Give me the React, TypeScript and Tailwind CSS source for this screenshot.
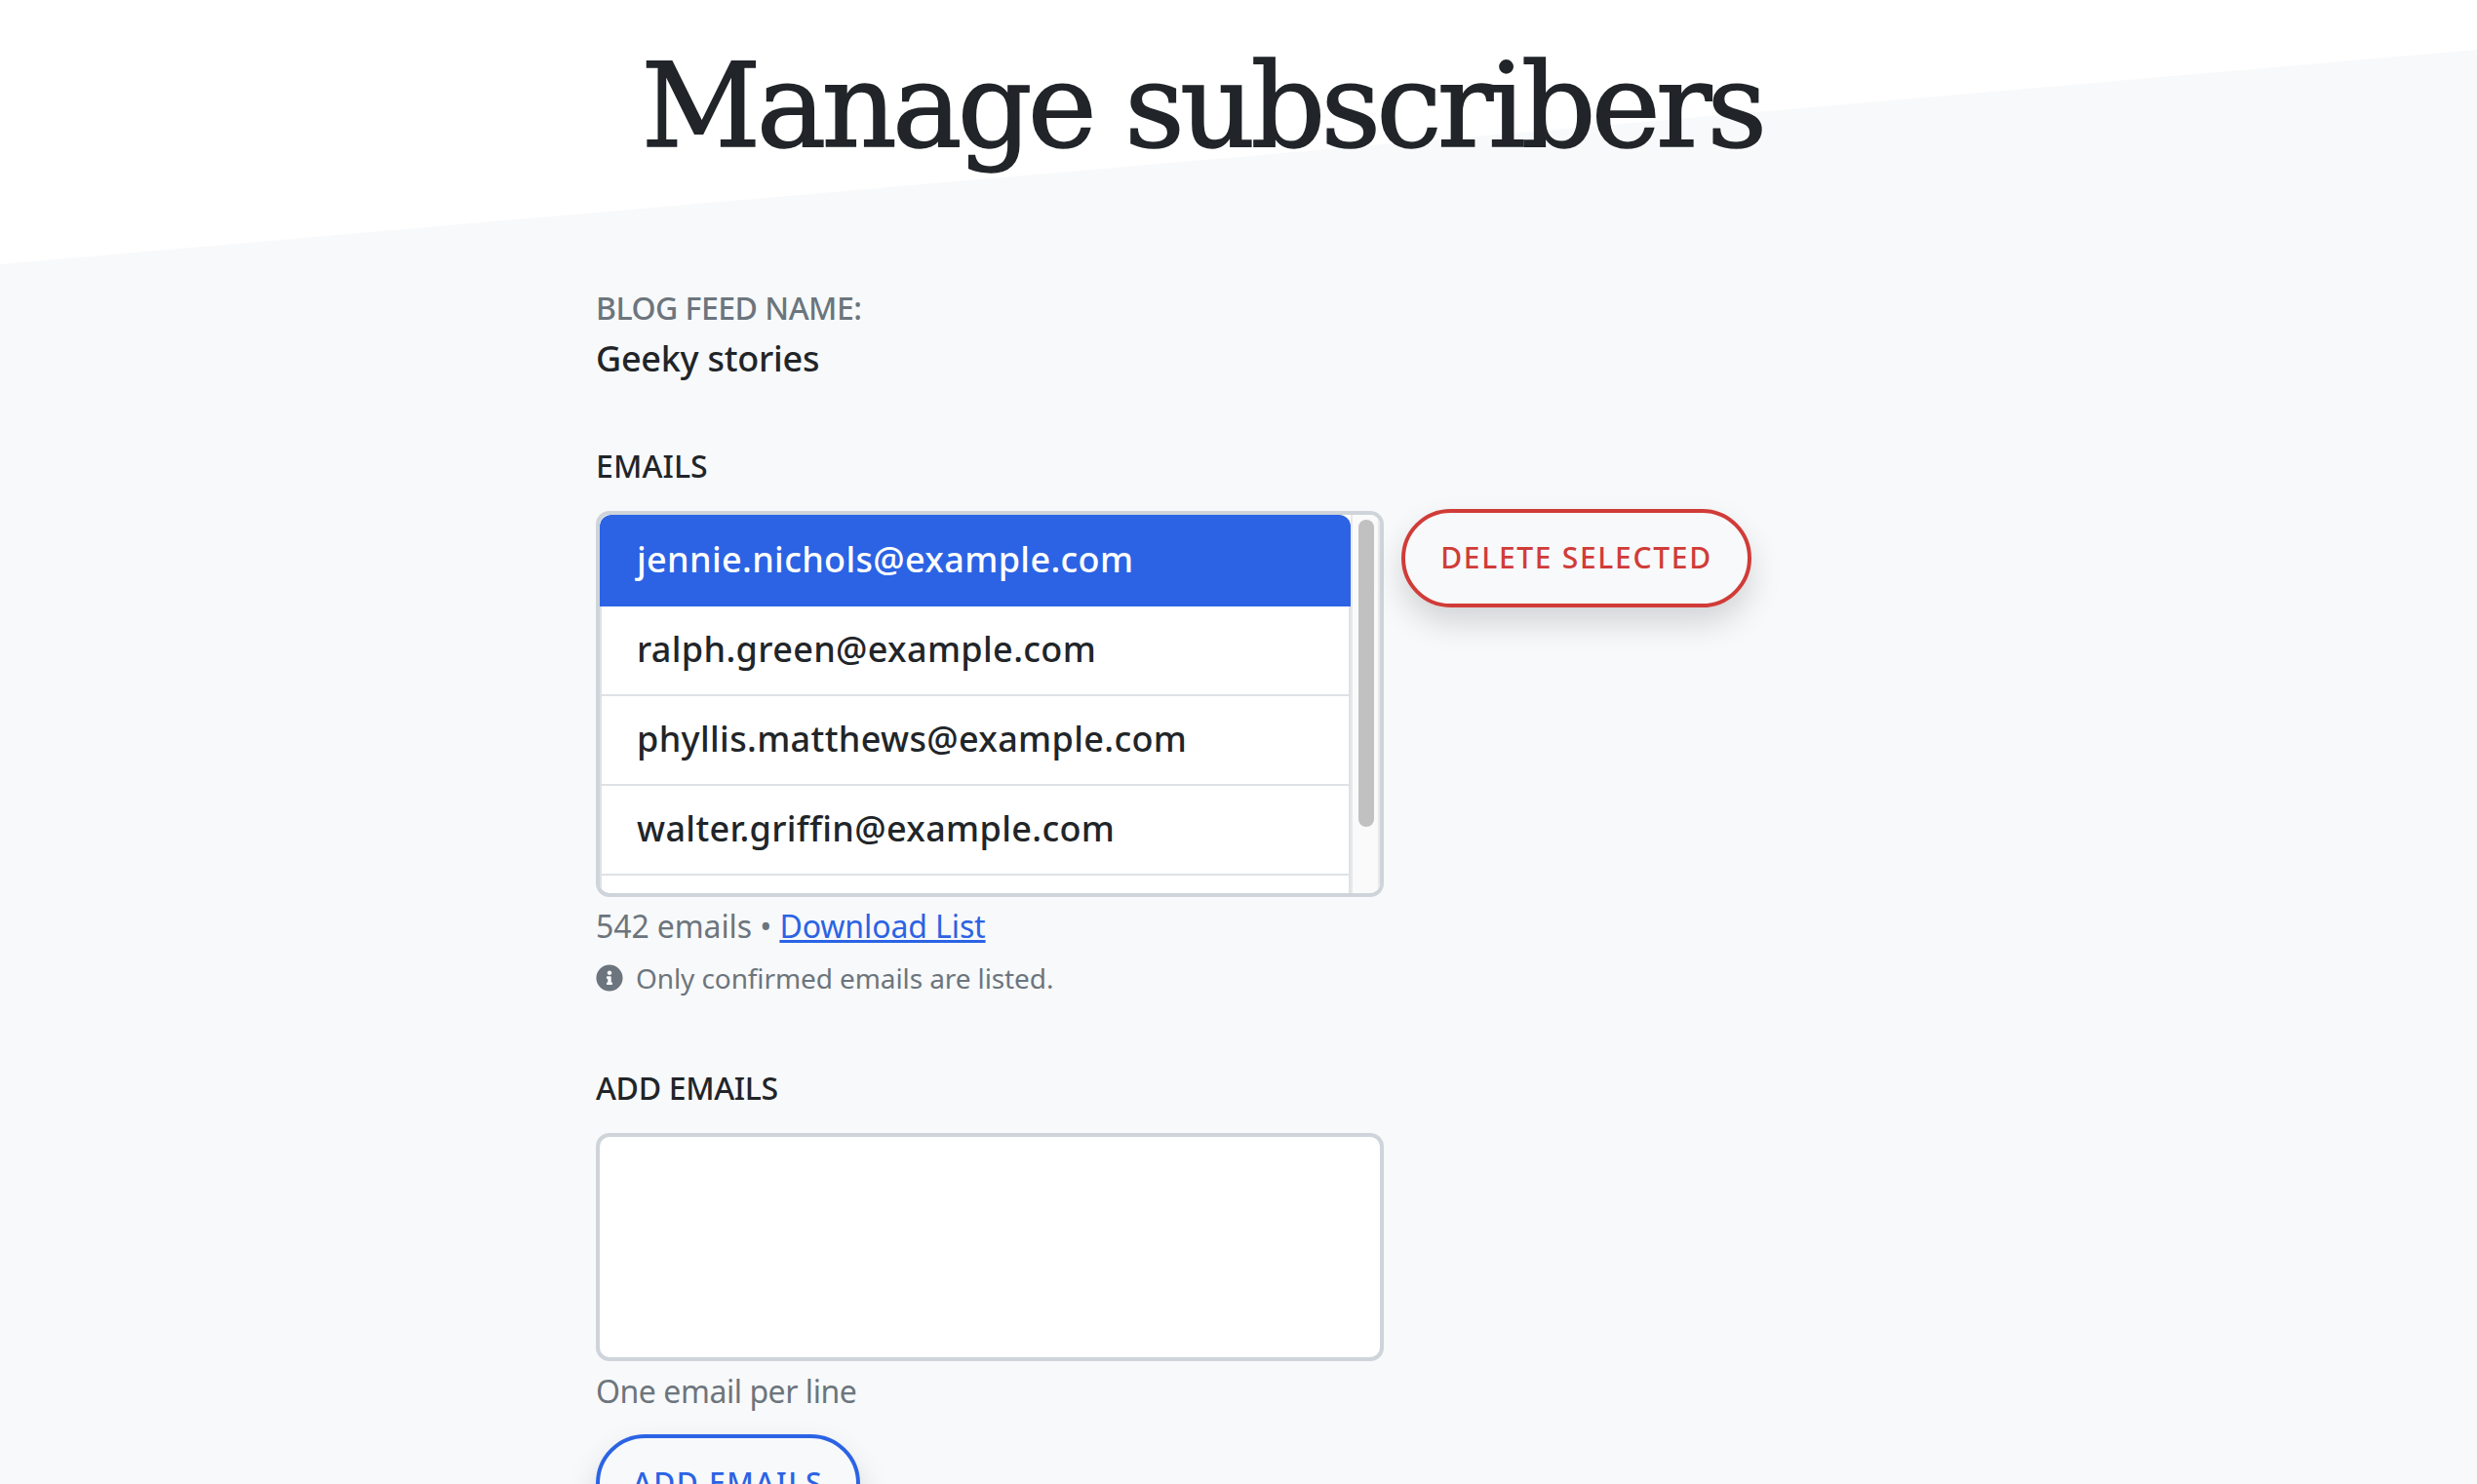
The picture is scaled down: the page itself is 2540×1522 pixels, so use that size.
import { FaInfoCircle } from 'react-icons/fa';

const emails = [
  'jennie.nichols@example.com',
  'ralph.green@example.com',
  'phyllis.matthews@example.com',
  'walter.griffin@example.com',
  '',
];

export default function App() {
  return (
    <div className="relative h-[1522px] overflow-hidden bg-white font-['Noto_Sans',sans-serif] text-[#212529]">
      {/* slanted page background */}
      <div className="absolute inset-0 bg-[#f8f9fa] [clip-path:polygon(0_271px,100%_51px,100%_100%,0_100%)]" />

      <div className="relative ml-[611px] w-[1243px]">
        <h1 className="pt-[39px] text-center font-['DejaVu_Serif',serif] text-[120px] leading-[140px] tracking-[-4.8px] text-[#212529] [-webkit-text-stroke:1.5px_#212529]">
          Manage subscribers
        </h1>

        <div className="mt-[117px] text-[32px] leading-[40px] tracking-[-0.5px] text-[#6c757d] font-medium">BLOG FEED NAME:</div>
        <div className="mt-[8px] text-[36px] leading-[48px] tracking-[-0.25px] font-medium">Geeky stories</div>

        <div className="mt-[66px] text-[32px] leading-[40px] tracking-[0.1px] font-medium">EMAILS</div>

        <div className="mt-[26px] flex items-start">
          <div className="flex h-[396px] w-[808px] overflow-hidden rounded-[14px] border-4 border-[#ced4da] bg-white">
            <ul className="flex-1">
              {emails.map((email, i) => (
                <li
                  key={i}
                  className={
                    i === 0
                      ? "flex h-[94px] items-center rounded-t-[12px] bg-[#2b63e4] pb-[2px] pl-[38px] text-[36px] font-medium tracking-[0.35px] text-white"
                      : "flex h-[92px] items-center border-x-2 border-b-2 border-[#dee2e6] pb-[2px] pl-[36px] text-[36px] font-medium tracking-[0.35px]"
                  }
                >
                  {email}
                </li>
              ))}
            </ul>
            <div className="w-[30px] border-x-2 border-[#e8e8e8] bg-[#fafafa] pl-[6px] pt-[5px]">
              <div className="h-[315px] w-[16px] rounded-full bg-[#c1c1c1]" />
            </div>
          </div>
          <button className="ml-[18px] -mt-[2px] h-[101px] w-[359px] rounded-full border-4 border-[#d03c38] pb-[2px] text-[30px] font-medium tracking-[1.7px] text-[#d03c38] shadow-[0_16px_32px_rgba(0,0,0,0.15)]">
            DELETE SELECTED
          </button>
        </div>

        <div className="mt-[8px] text-[32px] leading-[44px] text-[#6c757d] tracking-[-0.1px]">
          542 emails • <a className="text-[#2b63e4] underline">Download List</a>
        </div>
        <div className="mt-[13px] flex items-center text-[28px] leading-[36px] text-[#6c757d] tracking-[-0.1px]">
          <FaInfoCircle className="mr-[13px] h-[28px] w-[28px]" />
          Only confirmed emails are listed.
        </div>

        <div className="mt-[75px] text-[32px] leading-[40px] font-medium tracking-[-0.35px]">ADD EMAILS</div>

        <textarea className="mt-[26px] block h-[234px] w-[808px] resize-none rounded-[14px] border-4 border-[#ced4da] bg-white" />

        <div className="mt-[9px] text-[32px] leading-[44px] tracking-[-0.45px] text-[#6c757d]">One email per line</div>

        <button className="mt-[22px] h-[101px] w-[271px] rounded-full border-4 border-[#2b63e4] pb-[2px] text-[30px] font-medium tracking-[1.7px] text-[#2b63e4] shadow-[0_16px_32px_rgba(0,0,0,0.15)]">
          ADD EMAILS
        </button>
      </div>
    </div>
  );
}
